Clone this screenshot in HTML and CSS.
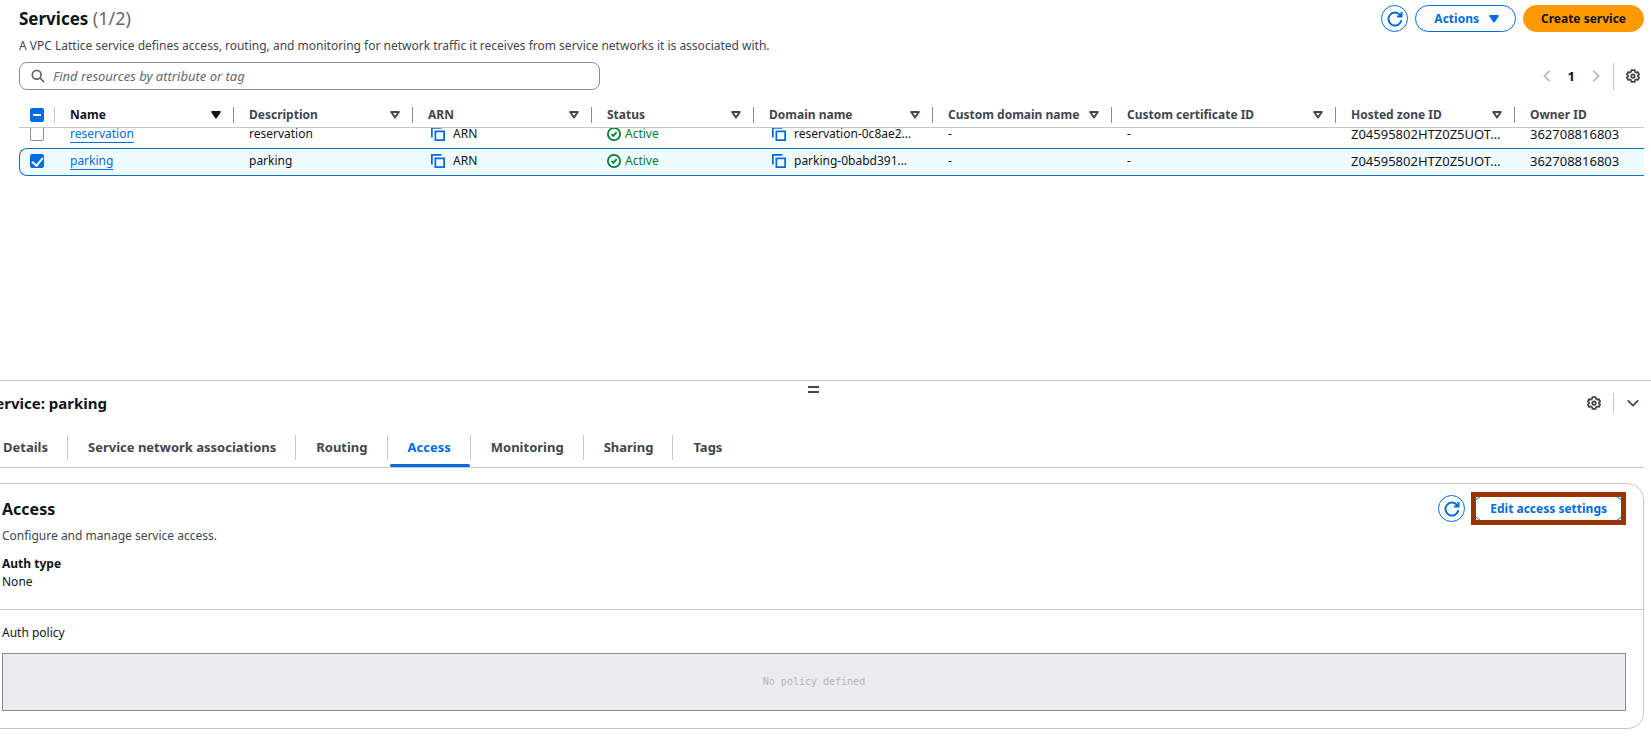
FILE: index.html
```html
<!DOCTYPE html>
<html lang="en">
<head>
    <meta charset="UTF-8">
    <meta name="viewport" content="width=device-width, initial-scale=1.0">
    <title>Services</title>
    <link rel="stylesheet" href="styles.css">
</head>
<body>
    <!-- Shared icons -->
    <svg class="sprite" aria-hidden="true">
        <symbol id="refresh" viewBox="0 0 16 16">
            <path d="M14.4 9.2A6.5 6.5 0 1 1 12.9 3.8L14 5M14.5 1v4.500H10"/>
        </symbol>
        <symbol id="gear" viewBox="0 0 16 16">
            <path d="M6.300 1.200h3.400l.5 2 1.300.8 2-.6 1.600 2.900L13.700 7.300v1.400l1.400 1-1.600 2.900-2-.6-1.300.8-.5 2H6.300l-.5-2-1.300-.8-2 .6L.9 9.700l1.400-1V7.300L.9 6.300l1.600-2.900 2 .6 1.300-.8z"/>
            <circle cx="8" cy="8" r="2"/>
        </symbol>
        <symbol id="copy" viewBox="0 0 16 16">
            <path d="M1 12V1h11"/>
            <path d="M5 5h10v10H5z"/>
        </symbol>
        <symbol id="check" viewBox="0 0 16 16">
            <circle cx="8" cy="8" r="7"/>
            <path d="M5 8l2.200 2.200L11 5.800"/>
        </symbol>
        <symbol id="sort" viewBox="0 0 10 8">
            <path d="M1.200 1h7.600L5 6.500z"/>
        </symbol>
    </svg>

    <main class="services">
        <header class="services-header">
            <h1>Services <span class="counter">(1/2)</span></h1>
            <div class="actions">
                <button class="btn round" type="button" aria-label="Refresh"><svg class="icon"><use href="#refresh"/></svg></button>
                <button class="btn dropdown" type="button">Actions <svg class="sort filled"><use href="#sort"/></svg></button>
                <button class="btn primary" type="button">Create service</button>
            </div>
        </header>
        <p class="description">A VPC Lattice service defines access, routing, and monitoring for network traffic it receives from service networks it is associated with.</p>

        <div class="toolbar">
            <label class="search">
                <svg class="icon" viewBox="0 0 16 16"><circle cx="6.500" cy="6.500" r="5"/><path d="M10.200 10.200l4.800 4.800"/></svg>
                <input type="search" placeholder="Find resources by attribute or tag" aria-label="Find resources">
            </label>
            <div class="pagination">
                <button class="page-arrow" type="button" aria-label="Previous page"><svg class="icon" viewBox="0 0 16 16"><path d="M11 2L5 8l6 6"/></svg></button>
                <button class="page" type="button">1</button>
                <button class="page-arrow" type="button" aria-label="Next page"><svg class="icon" viewBox="0 0 16 16"><path d="M5 2l6 6-6 6"/></svg></button>
                <button class="settings" type="button" aria-label="Preferences"><svg class="icon"><use href="#gear"/></svg></button>
            </div>
        </div>

        <table class="services-table">
            <colgroup>
                <col class="col-check"><col class="col-text"><col class="col-text"><col class="col-text"><col class="col-status">
                <col class="col-text"><col class="col-text"><col class="col-cert"><col class="col-text"><col>
            </colgroup>
            <thead>
                <tr>
                    <th><input class="mixed" type="checkbox" aria-label="Select all"></th>
                    <th class="sorted"><div>Name <svg class="sort filled"><use href="#sort"/></svg></div></th>
                    <th><div>Description <svg class="sort"><use href="#sort"/></svg></div></th>
                    <th><div>ARN <svg class="sort"><use href="#sort"/></svg></div></th>
                    <th><div>Status <svg class="sort"><use href="#sort"/></svg></div></th>
                    <th><div>Domain name <svg class="sort"><use href="#sort"/></svg></div></th>
                    <th><div>Custom domain name <svg class="sort"><use href="#sort"/></svg></div></th>
                    <th><div>Custom certificate ID <svg class="sort"><use href="#sort"/></svg></div></th>
                    <th><div>Hosted zone ID <svg class="sort"><use href="#sort"/></svg></div></th>
                    <th><div>Owner ID</div></th>
                </tr>
            </thead>
            <tbody>
                <tr>
                    <td><input type="checkbox" aria-label="Select reservation"></td>
                    <td><a href="#">reservation</a></td>
                    <td>reservation</td>
                    <td><div class="copy"><svg class="icon"><use href="#copy"/></svg><span>ARN</span></div></td>
                    <td><div class="status"><svg class="icon"><use href="#check"/></svg><span>Active</span></div></td>
                    <td><div class="copy"><svg class="icon"><use href="#copy"/></svg><span>reservation-0c8ae2…</span></div></td>
                    <td>-</td>
                    <td>-</td>
                    <td class="id">Z04595802HTZ0Z5UOT…</td>
                    <td class="id">362708816803</td>
                </tr>
                <tr class="selected">
                    <td><input type="checkbox" aria-label="Select parking" checked></td>
                    <td><a href="#">parking</a></td>
                    <td>parking</td>
                    <td><div class="copy"><svg class="icon"><use href="#copy"/></svg><span>ARN</span></div></td>
                    <td><div class="status"><svg class="icon"><use href="#check"/></svg><span>Active</span></div></td>
                    <td><div class="copy"><svg class="icon"><use href="#copy"/></svg><span>parking-0babd391…</span></div></td>
                    <td>-</td>
                    <td>-</td>
                    <td class="id">Z04595802HTZ0Z5UOT…</td>
                    <td class="id">362708816803</td>
                </tr>
            </tbody>
        </table>
    </main>

    <section class="split-panel">
        <div class="handle"></div>
        <header class="panel-header">
            <h2>Service: parking</h2>
            <div class="panel-tools">
                <button class="tool" type="button" aria-label="Panel preferences"><svg class="icon"><use href="#gear"/></svg></button>
                <button class="tool close" type="button" aria-label="Close panel"><svg class="icon" viewBox="0 0 16 16"><path d="M2 5l6 6 6-6"/></svg></button>
            </div>
        </header>

        <nav class="tabs">
            <a href="#">Details</a>
            <a href="#">Service network associations</a>
            <a href="#">Routing</a>
            <a class="active" href="#">Access</a>
            <a href="#">Monitoring</a>
            <a href="#">Sharing</a>
            <a href="#">Tags</a>
        </nav>

        <div class="card">
            <div class="card-section">
                <header class="card-header">
                    <h2>Access</h2>
                    <div class="actions">
                        <button class="btn round" type="button" aria-label="Refresh"><svg class="icon"><use href="#refresh"/></svg></button>
                        <div class="highlight"><button class="btn" type="button">Edit access settings</button></div>
                    </div>
                </header>
                <p class="description">Configure and manage service access.</p>
                <dl>
                    <dt>Auth type</dt>
                    <dd>None</dd>
                </dl>
            </div>
            <div class="card-section policy">
                <p>Auth policy</p>
                <div class="policy-box">No policy defined</div>
            </div>
        </div>
    </section>
</body>
</html>
```
FILE: styles.css
```css
* {
    box-sizing: border-box;
}
body {
    margin: 0;
    min-height: 100vh;
    overflow-x: hidden;
    display: flex;
    flex-direction: column;
    font-family: "Noto Sans", "Open Sans", sans-serif;
    font-size: 12px;
    line-height: 18px;
    color: #0f141a;
    background-color: #fff;
}
h1, h2, p, dl, dd {
    margin: 0;
}
h1 {
    font-size: 17px;
    line-height: 24px;
}
h2 {
    font-size: 16px;
    line-height: 20px;
}
button, input {
    font: inherit;
    color: inherit;
}
button {
    padding: 0;
    border: none;
    background: none;
}
.sprite {
    position: absolute;
    width: 0;
    height: 0;
}
.icon {
    width: 14px;
    height: 14px;
    flex: none;
    fill: none;
    stroke: currentColor;
    stroke-width: 2;
}
.sort {
    width: 10px;
    height: 8px;
    flex: none;
    fill: none;
    stroke: currentColor;
    stroke-width: 2;
    stroke-linejoin: round;
}
.sort.filled {
    fill: currentColor;
}

/* Services list */
.services {
    flex: 1;
    padding: 5px 7px 0 19px;
}
.services-header {
    display: flex;
    justify-content: space-between;
    align-items: center;
}
.counter {
    font-size: 18px;
    font-weight: normal;
    color: #656871;
}
.actions {
    display: flex;
    align-items: center;
    gap: 7px;
}
.btn {
    display: flex;
    align-items: center;
    justify-content: center;
    height: 27px;
    padding: 0 17px;
    border: 1px solid #006ce0;
    border-radius: 14px;
    background-color: #fff;
    color: #006ce0;
    font-weight: bold;
    white-space: nowrap;
}
.btn.round {
    width: 27px;
    padding: 0;
}
.btn.round .icon {
    width: 16px;
    height: 16px;
}
.btn.dropdown {
    gap: 10px;
    padding: 0 16px 0 18px;
}
.btn.primary {
    border-color: #ff9900;
    background-color: #ff9900;
    color: #0f141a;
}
.description {
    color: #424650;
}
.services .description {
    margin-top: 5px;
}
.toolbar {
    display: flex;
    justify-content: space-between;
    align-items: center;
    margin: 7px 0 4px;
}
.search {
    display: flex;
    align-items: center;
    gap: 8px;
    width: 581px;
    height: 28px;
    padding: 0 11px;
    border: 1px solid #8c8c94;
    border-radius: 8px;
    color: #656871;
    font-size: 13px;
}
.search input {
    flex: 1;
    padding: 0;
    border: none;
    outline: none;
    background: none;
}
.search input::placeholder {
    color: #656871;
    font-style: italic;
    opacity: 1;
}
.pagination {
    display: flex;
    align-items: center;
    color: #424650;
    font-size: 13px;
}
.pagination button {
    display: flex;
}
.page-arrow {
    color: #b4b4bb;
}
.pagination .page {
    padding: 0 14px;
    color: #0f141a;
    font-weight: bold;
}
.pagination .settings {
    height: 27px;
    align-items: center;
    margin-left: 10px;
    padding: 0 4px 0 12px;
    border-left: 1px solid #c6c6cd;
}

.services-table {
    width: 100%;
    table-layout: fixed;
    border-collapse: separate;
    border-spacing: 0;
}
.col-check {
    width: 36px;
}
.col-text {
    width: 179px;
}
.col-status {
    width: 162px;
}
.col-cert {
    width: 224px;
}
.services-table th, .services-table td {
    height: 27px;
    padding: 0 12px 0 15px;
    text-align: left;
    white-space: nowrap;
    overflow: hidden;
    text-overflow: ellipsis;
}
.services-table td {
    padding-bottom: 2px;
}
.services-table .id {
    font-size: 13px;
}
.services-table th {
    position: relative;
    top: 7px;
    z-index: 1;
    padding-top: 2px;
    border-bottom: 1px solid #c6c6cd;
    background-color: #fff;
    color: #424650;
}
.services-table th.sorted {
    color: #0f141a;
}
.services-table th:first-child, .services-table td:first-child {
    padding-left: 11px;
    padding-right: 0;
}
.services-table th div {
    display: flex;
    align-items: center;
    justify-content: space-between;
    margin-right: 1px;
}
.services-table th:not(:last-child)::after {
    content: "";
    position: absolute;
    top: 6px;
    right: 0;
    width: 1px;
    height: 16px;
    background-color: #8c8c94;
}
.services-table th:first-child::after {
    background-color: #c6c6cd;
}
.services-table input {
    display: block;
    appearance: none;
    width: 14px;
    height: 14px;
    margin: 0;
    border: 1px solid #8c8c94;
    border-radius: 2px;
    background-color: #fff;
}
.services-table input.mixed, .services-table input:checked {
    display: flex;
    align-items: center;
    justify-content: center;
    border-color: #006ce0;
    background-color: #006ce0;
}
.services-table input.mixed::before {
    content: "";
    width: 8px;
    height: 2px;
    background-color: #fff;
}
.services-table input:checked::before {
    content: "";
    width: 5px;
    height: 9px;
    margin-bottom: 2px;
    border: solid #fff;
    border-width: 0 2px 2px 0;
    transform: rotate(40deg);
}
.services-table a {
    color: #006ce0;
    text-decoration: underline;
    text-underline-offset: 4px;
    text-decoration-skip-ink: none;
}
.copy, .status {
    display: flex;
    align-items: center;
    gap: 4px;
}
.copy {
    gap: 8px;
    padding-left: 3px;
}
.copy span {
    overflow: hidden;
    text-overflow: ellipsis;
}
.copy .icon {
    color: #006ce0;
}
.status {
    color: #00802f;
}
.services-table .selected td {
    height: 28px;
    border: solid #0f70b8;
    border-width: 1px 0;
    background-color: #f0fbff;
}
.services-table .selected td:first-child {
    padding-left: 10px;
    border-left-width: 1px;
    border-radius: 8px 0 0 8px;
}

/* Split panel, its left edge runs past the window */
.split-panel {
    margin-left: -17px;
    padding: 5px 7px 19px 0;
    border-top: 1px solid #c6c6cd;
}
.handle {
    width: 11px;
    height: 7px;
    margin: 0 auto;
    border: solid #424650;
    border-width: 2px 0;
}
.panel-header {
    display: flex;
    justify-content: space-between;
    align-items: center;
    padding-left: 4px;
}
.panel-header h2 {
    font-size: 15px;
}
.panel-tools {
    display: flex;
    color: #424650;
}
.tool {
    display: flex;
    align-items: center;
    height: 20px;
    padding: 0 12px;
}
.tool.close {
    padding-right: 4px;
    border-left: 1px solid #c6c6cd;
}
.tabs {
    display: flex;
    margin-top: 14px;
    border-bottom: 1px solid #c6c6cd;
}
.tabs a {
    position: relative;
    height: 40px;
    padding: 11px 20px;
    color: #424650;
    font-size: 13px;
    font-weight: bold;
    text-decoration: none;
}
.tabs a:not(:last-child)::after {
    content: "";
    position: absolute;
    top: 8px;
    right: 0;
    width: 1px;
    height: 25px;
    background-color: #c6c6cd;
}
.tabs a.active {
    color: #006ce0;
}
.tabs a.active::before {
    content: "";
    position: absolute;
    left: 2px;
    right: 1px;
    bottom: 0;
    height: 3px;
    border-radius: 2px;
    background-color: #006ce0;
}
.card {
    margin-top: 15px;
    border: 1px solid #c6c6cd;
    border-radius: 16px;
}
.card-section {
    padding: 8px 17px 18px 18px;
}
.card-header {
    display: flex;
    justify-content: space-between;
    align-items: center;
}
.card-header .actions {
    gap: 6px;
}
.card .description {
    margin-top: 2px;
}
.highlight {
    display: flex;
    align-items: center;
    height: 33px;
    border: 5px solid #993300;
    background-color: #fff;
    overflow: hidden;
}
.highlight .btn {
    margin: 0 -4px;
}
.card dl {
    margin-top: 10px;
}
.card dt {
    font-weight: bold;
}
.policy {
    padding-top: 14px;
    padding-bottom: 17px;
    border-top: 1px solid #c6c6cd;
}
.policy-box {
    margin-top: 11px;
    padding: 19px 0;
    border: 1px solid #8c8c94;
    background-color: #ebebf0;
    color: #b4b4bb;
    font-family: "DejaVu Sans Mono", monospace;
    font-size: 10px;
    text-align: center;
}
```
